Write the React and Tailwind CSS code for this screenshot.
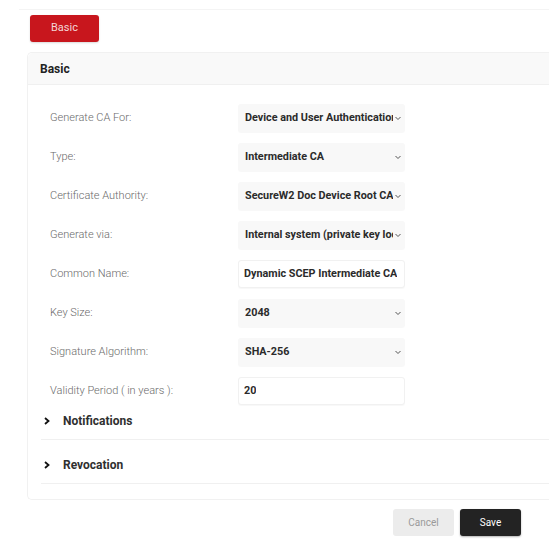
import React from 'react';

const fields = [
    { label: 'Generate CA For:', value: 'Device and User Authentication', kind: 'select' },
    { label: 'Type:', value: 'Intermediate CA', kind: 'select' },
    { label: 'Certificate Authority:', value: 'SecureW2 Doc Device Root CA', kind: 'select' },
    { label: 'Generate via:', value: 'Internal system (private key located here)', kind: 'select' },
    { label: 'Common Name:', value: 'Dynamic SCEP Intermediate CA', kind: 'input' },
    { label: 'Key Size:', value: '2048', kind: 'select' },
    { label: 'Signature Algorithm:', value: 'SHA-256', kind: 'select' },
    { label: 'Validity Period ( in years ):', value: '20', kind: 'input' },
];

const Chevron = () => (
    <svg width="8" height="8" viewBox="0 0 8 8" className="shrink-0">
        <path d="M1.5 3 L4 5.5 L6.5 3" fill="none" stroke="#555" strokeWidth="1" />
    </svg>
);

const Field = ({ field }) => (
    <div className="flex items-center h-[28px]">
        <div className="w-[210px] pl-[22px] text-[11px] text-[#6a6a6a] font-light">{field.label}</div>
        {field.kind === 'select' ? (
            <div className="w-[167px] h-[28px] flex items-center pl-[7px] pr-[3px] gap-[1px] bg-[#f8f8f8] rounded-[3px] shadow-[0_1px_1px_rgba(0,0,0,0.03)]">
                <span className="flex-1 overflow-hidden whitespace-nowrap text-[10.8px] font-bold text-[#2b2b2b]">{field.value}</span>
                <Chevron />
            </div>
        ) : (
            <div className="w-[167px] h-[28px] flex items-center pl-[5px] bg-white rounded-[3px] border border-[#f1f1f1] shadow-[0_1px_1px_rgba(0,0,0,0.03)]">
                <span className="overflow-hidden whitespace-nowrap text-[10.8px] font-bold text-[#2b2b2b]">{field.value}</span>
            </div>
        )}
    </div>
);

const Collapsible = ({ title }) => (
    <div className="ml-[13px] border-b border-[#f0f0f0] h-[44px] pt-[6px] flex items-center">
        <svg width="8" height="8" viewBox="0 0 8 8" className="ml-[2px] mr-[12px]">
            <path d="M2 1 L5.5 4 L2 7" fill="none" stroke="#111" strokeWidth="1.8" />
        </svg>
        <span className="text-[12px] font-bold text-[#2f2f2f]">{title}</span>
    </div>
);

export default function App() {
    return (
        <div className="w-[549px] h-[547px] overflow-hidden bg-white" style={{ fontFamily: 'Roboto, "Liberation Sans", sans-serif' }}>
            <div className="ml-[19px] mt-[9px] border-t border-[#f4f4f4]">
                <div className="ml-[11px] mt-[5px] w-[69px] h-[27px] bg-[#c8161d] rounded-[3px] flex items-center justify-center text-[11px] text-[#f3d6d7] shadow-[0_1px_2px_rgba(0,0,0,0.15)]">
                    Basic
                </div>
            </div>

            <div className="ml-[27px] mt-[10px] w-[540px] border border-r-0 border-[#f1f1f1] rounded-l-[5px] pb-[15px]">
                <div className="h-[32px] bg-[#f9f9f9] border-b border-[#f0f0f0] flex items-center pl-[12px] rounded-tl-[5px]">
                    <span className="text-[12px] font-bold text-[#222]">Basic</span>
                </div>
                <div className="pt-[19px] flex flex-col gap-[11px]">
                    {fields.map((f) => (
                        <Field key={f.label} field={f} />
                    ))}
                </div>
                <div className="-mt-[9px]">
                    <Collapsible title="Notifications" />
                    <Collapsible title="Revocation" />
                </div>
            </div>

            <div className="flex justify-end gap-[6px] pr-[28px] mt-[9px]">
                <div className="w-[61px] h-[27px] bg-[#ececec] rounded-[3px] flex items-center justify-center text-[10px] text-[#9a9a9a]">
                    Cancel
                </div>
                <div className="w-[61px] h-[27px] bg-[#232323] rounded-[3px] flex items-center justify-center text-[10px] text-white shadow-[0_1px_2px_rgba(0,0,0,0.3)]">
                    Save
                </div>
            </div>
        </div>
    );
}
